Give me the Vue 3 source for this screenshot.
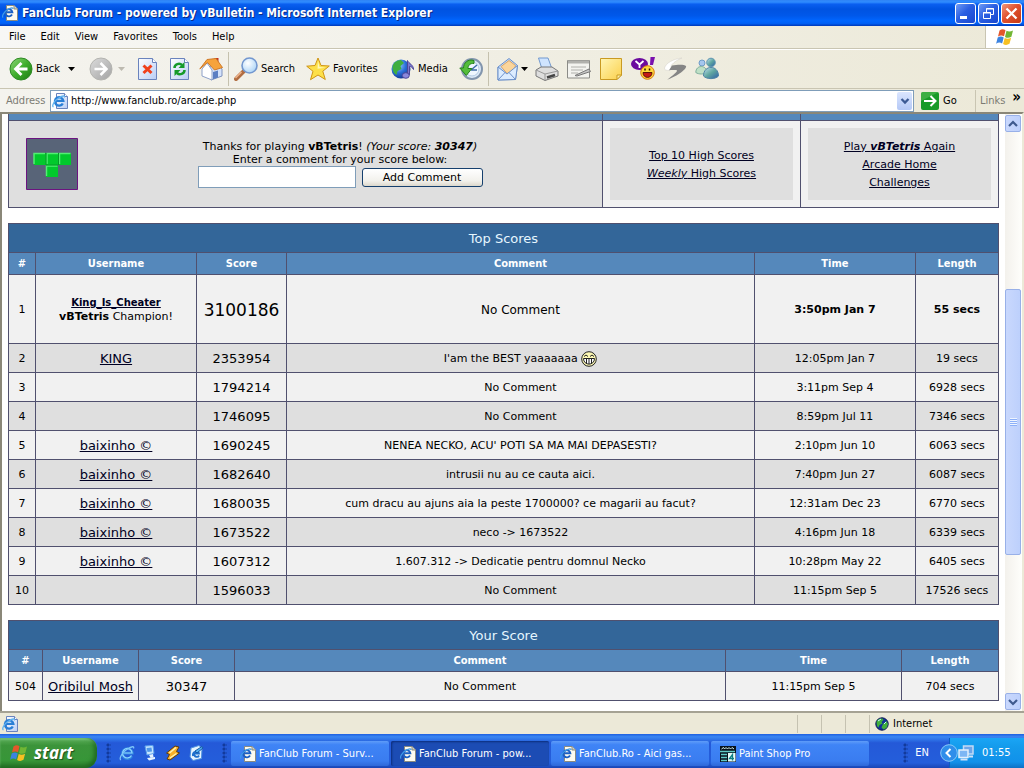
<script setup>
import { ref } from 'vue'

const address = ref('http://www.fanclub.ro/arcade.php')
const comment = ref('')

const menus = ['File', 'Edit', 'View', 'Favorites', 'Tools', 'Help']

const topScores = [
  { rank: 2, user: 'KING', score: '2353954', comment: "I'am the BEST yaaaaaaa", grin: true, time: '12:05pm Jan 7', length: '19 secs' },
  { rank: 3, user: '', score: '1794214', comment: 'No Comment', time: '3:11pm Sep 4', length: '6928 secs' },
  { rank: 4, user: '', score: '1746095', comment: 'No Comment', time: '8:59pm Jul 11', length: '7346 secs' },
  { rank: 5, user: 'baixinho ©', score: '1690245', comment: "NENEA NECKO, ACU' POTI SA MA MAI DEPASESTI?", time: '2:10pm Jun 10', length: '6063 secs' },
  { rank: 6, user: 'baixinho ©', score: '1682640', comment: 'intrusii nu au ce cauta aici.', time: '7:40pm Jun 27', length: '6087 secs' },
  { rank: 7, user: 'baixinho ©', score: '1680035', comment: 'cum dracu au ajuns aia la peste 1700000? ce magarii au facut?', time: '12:31am Dec 23', length: '6770 secs' },
  { rank: 8, user: 'baixinho ©', score: '1673522', comment: 'neco -> 1673522', time: '4:16pm Jun 18', length: '6339 secs' },
  { rank: 9, user: 'baixinho ©', score: '1607312', comment: '1.607.312 -> Dedicatie pentru domnul Necko', time: '10:28pm May 22', length: '6405 secs' },
  { rank: 10, user: '', score: '1596033', comment: 'No Comment', time: '11:15pm Sep 5', length: '17526 secs' },
]

const tasks = [
  { label: 'FanClub Forum - Surv...', icon: 'doc', active: false },
  { label: 'FanClub Forum - pow...', icon: 'doc', active: true },
  { label: 'FanClub.Ro - Aici gas...', icon: 'doc', active: false },
  { label: 'Paint Shop Pro', icon: 'psp', active: false },
]
</script>

<template>
  <div class="screen">
    <svg class="defs" aria-hidden="true">
      <defs>
        <linearGradient id="gGreen" x1="0" y1="0" x2="1" y2="1">
          <stop offset="0" stop-color="#8fd67a" /><stop offset=".5" stop-color="#3fae2c" /><stop offset="1" stop-color="#1c7a12" />
        </linearGradient>
        <linearGradient id="gGray" x1="0" y1="0" x2="1" y2="1">
          <stop offset="0" stop-color="#dcdcdc" /><stop offset="1" stop-color="#a2a2a2" />
        </linearGradient>
        <linearGradient id="gPage" x1="0" y1="0" x2="1" y2="1">
          <stop offset="0" stop-color="#ffffff" /><stop offset="1" stop-color="#b9cdf5" />
        </linearGradient>
        <linearGradient id="gNote" x1="0" y1="0" x2="1" y2="1">
          <stop offset="0" stop-color="#fff6b4" /><stop offset="1" stop-color="#fbd04c" />
        </linearGradient>
        <linearGradient id="gBody" x1="0" y1="0" x2="1" y2="1">
          <stop offset="0" stop-color="#c4e2f2" /><stop offset=".5" stop-color="#5fa6a0" /><stop offset="1" stop-color="#2f5fa8" />
        </linearGradient>
        <radialGradient id="gGlobe" cx=".35" cy=".3" r=".8">
          <stop offset="0" stop-color="#9fd0ff" /><stop offset=".5" stop-color="#2a6fd8" /><stop offset="1" stop-color="#0b2a86" />
        </radialGradient>
        <radialGradient id="gLens" cx=".4" cy=".35" r=".7">
          <stop offset="0" stop-color="#ffffff" /><stop offset="1" stop-color="#a9d3f7" />
        </radialGradient>
      </defs>
      <symbol id="doc" viewBox="0 0 16 16">
        <path d="M4.500 .5h7.500l3.500 3.500v11.500h-11z" fill="#fdfbf0" stroke="#8b8b80" />
        <path d="M12 .5v3.500h3.500" fill="#d8d4bc" stroke="#8b8b80" />
        <path d="M10 9.500a3.600 3.600 0 1 1 .4-2.200h-6" fill="none" stroke="#1b60c4" stroke-width="1.900" />
        <path d="M1.200 12.500c-2-1 1-6 4.500-8s5.800-2.300 5-.5" fill="none" stroke="#3f9be8" stroke-width="1.200" />
      </symbol>
      <symbol id="webpage" viewBox="0 0 16 16">
        <path d="M4.500 .5h8l3 3v12h-11z" fill="url(#gPage)" stroke="#6a83bd" />
        <path d="M12.500 .5v3h3" fill="#fff" stroke="#6a83bd" />
        <path d="M10.800 10.500a4.200 4.200 0 1 1 .5-2.600h-7" fill="none" stroke="#2a7fd6" stroke-width="2.400" />
        <path d="M1.500 14c-2.300-1 1-6.500 5.200-9s6.500-2.700 5.500-.5" fill="none" stroke="#62b4f0" stroke-width="1.300" />
      </symbol>
      <symbol id="ie" viewBox="0 0 16 16">
        <path d="M12.800 11a5 5 0 1 1 .6-2.800h-9" fill="none" stroke="#2f86e0" stroke-width="2.800" />
        <path d="M12.500 10.500a4.800 4.800 0 1 1 .6-2.500h-8" fill="none" stroke="#8fd4ff" stroke-width="1.200" />
        <path d="M2 15c-2.500-1 1-7.500 6-10.700s7.500-3.300 6.500-.8" fill="none" stroke="#7cc4f8" stroke-width="1.300" />
      </symbol>
      <symbol id="flag" viewBox="0 0 20 18">
        <path d="M4.500 2.500c2-1.600 4-1.600 6-.3L9 8.300c-2-1.200-4-1-6 .2z" fill="#e4572b" />
        <path d="M11.500 2.800c2 1.200 4.200 1 6.500-.3l-1.600 6.200c-2.200 1.300-4.400 1.400-6.400.2z" fill="#71b634" />
        <path d="M2.700 9.600c2-1.300 4-1.400 6-.2l-1.600 6c-2-1.200-4-1-6 .3z" fill="#3b83e0" />
        <path d="M9.700 10c2 1.200 4.200 1 6.400-.2l-1.600 6c-2.200 1.400-4.400 1.400-6.400.2z" fill="#f7c022" />
      </symbol>
      <symbol id="globe" viewBox="0 0 16 16">
        <circle cx="8" cy="8" r="6.200" fill="#12309a" stroke="#0a1550" />
        <path d="M2.500 6c1-3 4-4 6-3.500l1 1.500-2 2 1 1.500-3 1.500-1 2.500-1.500-1.500zM9 8l3.500-3 1.500 3-1.500 4-3 1.500-2-2z" fill="#3fae3a" />
        <path d="M4 5l3-2M10 8l2-2" stroke="#c9f5ff" />
      </symbol>
      <symbol id="psp" viewBox="0 0 16 16">
        <path d="M0 0h16v16h-16z" fill="#07121c" />
        <path d="M1.500 3l2-1.500 1 1.500 1.500-1.500L7.500 3 9 1.500 10.500 3 12 1.500 14 3" stroke="#d8f4f0" fill="none" />
        <path d="M0 5.500h15M1 8.500h6M1 11.500h6M1 14.500h6" stroke="#61c9c4" stroke-width="1.400" />
        <path d="M8 7h7.500v8.500h-7.500z" fill="#e6fbf7" />
        <path d="M12.500 14.500v-6l-3 4h4.500" stroke="#0c7f83" fill="none" stroke-width="1.300" />
      </symbol>
    </svg>

    <header class="titlebar">
      <svg class="i16"><use href="#doc" /></svg>
      <h1>FanClub Forum - powered by vBulletin - Microsoft Internet Explorer</h1>
      <button class="win" aria-label="Minimize"><svg viewBox="0 0 21 21"><path d="M5 14.500h7" stroke="#fff" stroke-width="3" /></svg></button>
      <button class="win" aria-label="Restore"><svg viewBox="0 0 21 21" fill="none" stroke="#fff"><path d="M8.500 9v-3.500h7v6h-2.500M8 6h8" /><path d="M5.500 9.500h7v6h-7zM5 10h8" /></svg></button>
      <button class="win close" aria-label="Close"><svg viewBox="0 0 21 21"><path d="M5.500 5.500l10 10M15.500 5.500l-10 10" stroke="#fff" stroke-width="2.300" /></svg></button>
    </header>

    <nav class="menubar">
      <button v-for="m in menus" :key="m">{{ m }}</button>
      <span class="brand"><svg viewBox="0 0 20 18"><use href="#flag" /></svg></span>
    </nav>

    <div class="toolbar">
      <button>
        <svg class="i24" viewBox="0 0 24 24"><circle cx="12" cy="12" r="11" fill="url(#gGreen)" stroke="#2f8a25" /><path d="M12.500 6l-6 6 6 6M7 12h11.500" fill="none" stroke="#fff" stroke-width="2.800" /></svg>
        Back
      </button>
      <button aria-label="Back history"><svg class="caret" viewBox="0 0 7 5"><path d="M0 0h7L3.500 4z" /></svg></button>
      <button aria-label="Forward"><svg class="i24" viewBox="0 0 24 24"><circle cx="12" cy="12" r="11" fill="url(#gGray)" stroke="#b4b4b0" /><path d="M11.500 6l6 6-6 6M17 12h-11.500" fill="none" stroke="#fff" stroke-width="2.500" /></svg></button>
      <button aria-label="Forward history"><svg class="caret" viewBox="0 0 7 5"><path d="M0 0h7L3.500 4z" fill="#bdbab0" /></svg></button>
      <button aria-label="Stop"><svg class="i24" viewBox="0 0 24 24"><path d="M1.500 1.500h14l4 4v17h-18z" fill="url(#gPage)" stroke="#6a83bd" /><path d="M15.500 1.500v4h4" fill="#fff" stroke="#6a83bd" /><path d="M6.500 8.500l8 7.500M14.500 8.500l-8 7.500" stroke="#f0401c" stroke-width="3" /></svg></button>
      <button aria-label="Refresh"><svg class="i24" viewBox="0 0 24 24"><path d="M1.500 1.500h14l4 4v17h-18z" fill="url(#gPage)" stroke="#6a83bd" /><path d="M15.500 1.500v4h4" fill="#fff" stroke="#6a83bd" /><path d="M5.500 11c0-4 5-5.500 7.500-3M15.500 13c0 4-5 5.500-7.500 3" fill="none" stroke="#159a2a" stroke-width="2.500" /><path d="M15.500 5v6h-6zM5.500 19v-6h6z" fill="#159a2a" /></svg></button>
      <button aria-label="Home">
        <svg class="i24" viewBox="0 0 24 24"><path d="M15.500 1h4v7h-4z" fill="#c23420" /><path d="M9 11l8-6 6 7v7l-11 4z" fill="#d4e2fb" stroke="#7f93be" /><path d="M3 12l5-6 5 7v10l-10-4z" fill="#fff" stroke="#8ea1c9" /><path d="M.8 12L8 2.500 17 1.500l6.500 9-8 2.500L8.500 5.500z" fill="#f6a33c" stroke="#cf7a28" /><path d="M14 15l5-1.500v7l-5 1.800z" fill="#5c7fc3" /></svg>
      </button>
      <i class="sep"></i>
      <button><svg class="i24" viewBox="0 0 24 24"><path d="M2 22l8-8" stroke="#b16d42" stroke-width="4" stroke-linecap="round" /><path d="M1.500 21l6-6" stroke="#efb48b" stroke-width="1.500" /><circle cx="15.500" cy="8.500" r="7.500" fill="url(#gLens)" stroke="#7397cf" stroke-width="1.600" /></svg>Search</button>
      <button><svg class="i24" viewBox="0 0 24 24"><path d="M12 1l3 7.500 8.300.5-6.500 5.200 2.500 8.300L12 18l-7.500 4.700 2.500-8.400L.7 9.200 9 8.500z" fill="#fde04a" stroke="#cf9416" stroke-linejoin="round" /><path d="M12 4l1.500 6 6 .7-8 1z" fill="#fff7b8" /></svg>Favorites</button>
      <button><svg class="i24" viewBox="0 0 24 24"><circle cx="10" cy="12" r="9.500" fill="url(#gGlobe)" /><path d="M1.500 10c.5-4 4-7 8.500-7l3 3-3.500 3 1 3-4 2-1 4c-2.500-1.500-4-4-4-8z" fill="#3fae3f" /><path d="M16.500 18V3.500c1 3 6 4 6 9-1-2-2.500-3-4-3V18" fill="#7c77cf" stroke="#4c4698" /><ellipse cx="14.800" cy="18.500" rx="3.500" ry="2.800" fill="#8a88dc" stroke="#4c4698" /></svg>Media</button>
      <button aria-label="History"><svg class="i24" viewBox="0 0 24 24"><circle cx="13" cy="12" r="10" fill="#dceaf8" stroke="#8295ad" stroke-width="2" /><circle cx="13" cy="12" r="7" fill="#eff7ff" stroke="#b5cbe4" /><path d="M12 13l6-5M12 13h6" stroke="#3f6ea8" stroke-width="1.500" /><path d="M15 3.500C9 1.500 4.500 6 4.500 11H.8l6.500 7.500 5.500-7H9c0-3 2-5.500 6-5z" fill="#55bd3b" stroke="#24801c" /></svg></button>
      <i class="sep"></i>
      <button aria-label="Mail"><svg class="i24" viewBox="0 0 24 24"><path d="M2 10L13 1.500l8.500 7-2 14L2 23z" fill="#c3dcfb" stroke="#6d91ca" /><path d="M5 9.500l8-6 6.500 5-1.500 5-7 3z" fill="#fbd59b" stroke="#d6a46a" /><path d="M2 10l9 7L21.500 8.500l-2 14L2 23z" fill="#dcecff" stroke="#6d91ca" /><path d="M2 23l7.500-8M19.500 22.500L13 15.500" stroke="#6d91ca" /></svg></button>
      <button aria-label="Mail options"><svg class="caret" viewBox="0 0 7 5"><path d="M0 0h7L3.500 4z" /></svg></button>
      <button aria-label="Print"><svg class="i24" viewBox="0 0 24 24"><path d="M3.500 1h9.500l4 11H7z" fill="#cfe4ff" stroke="#7299cf" /><path d="M1 13l5-3h11l6 4v5l-13 4.500L1 19z" fill="#dedede" stroke="#777" /><path d="M1 13l9 4 13-3M10 17v6" fill="none" stroke="#999" /><path d="M12 20.500l8-2.500" stroke="#444" stroke-width="2.500" /></svg></button>
      <button aria-label="Edit"><svg class="i24" viewBox="0 0 24 24"><path d="M.5 3.500h22v17.500H.5z" fill="#f3f3ef" stroke="#8c8c88" /><path d="M1 5h21" stroke="#b1b1ad" stroke-width="3" /><path d="M4 10h15M4 13h12M4 16h7" stroke="#b0b0ac" /><path d="M8 18.500l14-6.500 1.500 2.500L10 19z" fill="#c9c9c9" stroke="#777" /></svg></button>
      <button aria-label="Notes"><svg class="i24" viewBox="0 0 24 24"><path d="M1.500 1.500h21V18l-4.500 4.500H1.500z" fill="url(#gNote)" stroke="#c99a22" /><path d="M22.500 18H18v4.500z" fill="#fff2a8" stroke="#c99a22" /></svg></button>
      <button aria-label="Yahoo Messenger"><svg class="i24" viewBox="0 0 24 24"><ellipse cx="8.500" cy="7" rx="8.500" ry="6" fill="#6b0b9e" /><path d="M9 11l3 6 2-6z" fill="#6b0b9e" /><path d="M4.500 4l4 3.500 4-3.500M8.500 7v4" stroke="#fff" stroke-width="1.800" fill="none" /><path d="M19.500 0h4.500l-2 8h-3z" fill="#7a10ae" /><circle cx="16.500" cy="15.500" r="6.800" fill="#ffd83a" stroke="#d97814" /><path d="M12 15.500h9c0 6.500-9 6.500-9 0z" fill="#c51a16" stroke="#5d1407" /><path d="M14 11.500v2M18.500 11.500v2" stroke="#2c1300" stroke-width="1.500" /></svg></button>
      <button aria-label="Quick link"><svg class="i24" viewBox="0 0 24 24"><path d="M19 1C10 2 3 6 1.500 11c-.3 2 2 2.500 5 2.500l4-3C8 10.500 7.500 9.500 9 7.500 11 5 15 2.500 19 1z" fill="#fff" stroke="#d6d4cb" stroke-width=".6" /><path d="M9 8.500c5-1 12-1.500 14 .5 1 2-4 6-8 8.500S6 22 4 23c4-3.500 8.500-6.500 10-9 .5-1-1-1.200-8-.8z" fill="#858585" /></svg></button>
      <button aria-label="Messenger"><svg class="i24" viewBox="0 0 24 24"><circle cx="7" cy="6" r="3" fill="#a5c6ee" stroke="#6f9cc8" /><path d="M.8 15.500c0-8 11-8 11 0-3 2-8 2-11 0z" fill="#bfe0c6" stroke="#7fae9c" /><circle cx="16" cy="5.500" r="4.300" fill="url(#gBody)" stroke="#5c93b0" /><path d="M8.500 19c0-11.500 15-11.500 15 0-3 3.500-12 3.500-15 0z" fill="url(#gBody)" stroke="#4f84a6" /></svg></button>
    </div>

    <form class="addressbar" @submit.prevent>
      <label for="address">Address</label>
      <div class="combo">
        <svg class="i16"><use href="#webpage" /></svg>
        <input id="address" v-model="address" type="text" />
        <button type="button" class="arrow" aria-label="Show addresses"><svg viewBox="0 0 10 8"><path d="M1.500 2L5 5.500 8.500 2" fill="none" stroke="#3c5a94" stroke-width="2.300" /></svg></button>
      </div>
      <button class="go"><svg viewBox="0 0 18 18"><path d="M0 0h18v18h-18z" fill="#189a28" /><path d="M0 0h18L0 9z" fill="#5fc15e" opacity=".5" /><path d="M3 9h11M9.500 4l5 5-5 5" fill="none" stroke="#fff" stroke-width="2" /></svg>Go</button>
      <span class="links">Links <b>»</b></span>
    </form>

    <div class="viewport">
      <main class="page">
        <table class="grid intro">
          <colgroup><col /><col class="w197" /><col class="w197" /></colgroup>
          <tbody>
            <tr class="strip"><td></td><td></td><td></td></tr>
            <tr class="panel">
              <td class="alt">
                <div class="play">
                  <svg class="tetris" viewBox="0 0 52 52">
                    <path d="M.5.500h51v51H.5z" fill="#586478" stroke="#6c1480" />
                    <path d="M8 15h37v12H32v12H20V27H8z" fill="#02c92c" />
                    <path d="M8 26V15.500h11M21 26V15.500h11M33.500 26V15.500h11M20.500 38V28h11" fill="none" stroke="#52ee72" stroke-width="1.500" />
                    <path d="M20 15v12M32.500 15v12M20 27h12" stroke="#079a28" />
                  </svg>
                  <form class="comment" @submit.prevent>
                    <p>Thanks for playing <b>vBTetris</b>! <i>(Your score: <b>30347</b>)</i></p>
                    <label for="comment">Enter a comment for your score below:</label>
                    <div class="fields">
                      <input id="comment" v-model="comment" type="text" />
                      <button>Add Comment</button>
                    </div>
                  </form>
                </div>
              </td>
              <td class="light">
                <div class="inset"><a href="#top">Top 10 High Scores</a><a href="#weekly"><i>Weekly</i> High Scores</a></div>
              </td>
              <td class="light">
                <div class="inset"><a href="#play">Play <b><i>vBTetris</i></b> Again</a><a href="#home">Arcade Home</a><a href="#challenges">Challenges</a></div>
              </td>
            </tr>
          </tbody>
        </table>

        <table class="grid scores">
          <colgroup><col class="w26" /><col class="w160" /><col class="w89" /><col /><col class="w160" /><col class="w82" /></colgroup>
          <thead>
            <tr class="caption"><th colspan="6">Top Scores</th></tr>
            <tr class="heads"><th>#</th><th>Username</th><th>Score</th><th>Comment</th><th>Time</th><th>Length</th></tr>
          </thead>
          <tbody>
            <tr class="champ">
              <td>1</td>
              <td><a class="king" href="#user">King_Is_Cheater</a><br /><b>vBTetris</b> Champion!</td>
              <td class="big">3100186</td>
              <td class="mid">No Comment</td>
              <td><b>3:50pm Jan 7</b></td>
              <td><b>55 secs</b></td>
            </tr>
            <tr v-for="r in topScores" :key="r.rank" class="row">
              <td>{{ r.rank }}</td>
              <td class="name"><a v-if="r.user" href="#user">{{ r.user }}</a></td>
              <td class="score">{{ r.score }}</td>
              <td>
                {{ r.comment }}
                <svg v-if="r.grin" class="grin" viewBox="0 0 16 16" role="img" aria-label="grin"><circle cx="8" cy="8" r="7.300" fill="#fdf9b4" stroke="#222" /><path d="M3 5.500l2-1.500 2 1.500M9 5.500l2-1.500 2 1.500" fill="none" stroke="#222" /><path d="M2.500 7.500h11c0 7.500-11 7.500-11 0z" fill="#fff" stroke="#222" /><path d="M5.500 8v4.500M8 8v5M10.500 8v4.500" stroke="#222" /></svg>
              </td>
              <td>{{ r.time }}</td>
              <td>{{ r.length }}</td>
            </tr>
          </tbody>
        </table>

        <table class="grid scores">
          <colgroup><col class="w33" /><col class="w95" /><col class="w95" /><col /><col class="w175" /><col class="w96" /></colgroup>
          <thead>
            <tr class="caption"><th colspan="6">Your Score</th></tr>
            <tr class="heads"><th>#</th><th>Username</th><th>Score</th><th>Comment</th><th>Time</th><th>Length</th></tr>
          </thead>
          <tbody>
            <tr class="row own">
              <td>504</td>
              <td class="name"><a href="#user">Oribilul Mosh</a></td>
              <td class="score">30347</td>
              <td>No Comment</td>
              <td>11:15pm Sep 5</td>
              <td>704 secs</td>
            </tr>
          </tbody>
        </table>
      </main>
      <div class="scroll">
        <button aria-label="Scroll up"><svg viewBox="0 0 10 8"><path d="M1 6L5 2l4 4" fill="none" stroke="#3f5a8e" stroke-width="2.200" /></svg></button>
        <div class="above"></div>
        <div class="thumb"><i></i></div>
        <div class="below"></div>
        <button aria-label="Scroll down"><svg viewBox="0 0 10 8"><path d="M1 2l4 4 4-4" fill="none" stroke="#3f5a8e" stroke-width="2.200" /></svg></button>
      </div>
    </div>

    <div class="status">
      <svg class="i16"><use href="#webpage" /></svg>
      <i></i><i></i><i></i>
      <span class="zone"><svg class="i16"><use href="#globe" /></svg>Internet</span>
    </div>

    <footer class="taskbar">
      <button class="start"><svg viewBox="0 0 20 18"><use href="#flag" /></svg>start</button>
      <i class="dots"></i>
      <div class="quick">
        <button aria-label="Internet Explorer"><svg class="i16"><use href="#ie" /></svg></button>
        <button aria-label="Show desktop"><svg class="i16" viewBox="0 0 16 16"><path d="M3 1l8-.5 1 8-7 1.500z" fill="#c6e6ff" stroke="#5aa0ec" /><path d="M4.500 3l5-.5.500 4-4.500.5z" fill="#4f97ea" /><path d="M7 10l4-1 .5 3-3 .5zM5 13l8-1v2l-6 1.500z" fill="#e6f3ff" /></svg></button>
        <button aria-label="Winamp"><svg class="i16" viewBox="0 0 16 16"><path d="M10 1L1.500 8l3 1.500L2 14l3 1L14.500 8l-3-1.500L14 2z" fill="#f9b028" stroke="#5d3a10" /><path d="M11 2.500L4.500 8M11.500 8.500L5 13" stroke="#fff3b5" stroke-width="1.500" /></svg></button>
        <button aria-label="Outlook Express"><svg class="i16" viewBox="0 0 16 16"><path d="M3 3l8-2.500 3 3-.5 10L5 15.500 2 12z" fill="#e6f4ff" stroke="#4f92de" /><path d="M5 11c-1-5 6-6 6-2.500H6c0 4 4 4 5 2" fill="none" stroke="#1f70cd" stroke-width="1.800" /><path d="M7 6l7-4.500 1 1.500-6 5z" fill="#53b1f1" stroke="#175ba6" /></svg></button>
      </div>
      <i class="dots"></i>
      <div class="tasks">
        <button v-for="t in tasks" :key="t.label" :class="{ active: t.active }"><svg class="i16"><use :href="'#' + t.icon" /></svg><span>{{ t.label }}</span></button>
      </div>
      <i class="dots"></i>
      <span class="lang">EN</span>
      <div class="tray">
        <button class="expand" aria-label="Show hidden icons"><svg viewBox="0 0 18 18"><circle cx="9" cy="9" r="8.300" fill="#2f8eea" stroke="#8ccaf8" /><path d="M10.500 5L6.500 9l4 4" fill="none" stroke="#fff" stroke-width="2" /></svg></button>
        <svg class="i16" viewBox="0 0 16 16"><path d="M5.500 1h9.500v8H5.500z" fill="#6ca6ea" stroke="#c3daf5" stroke-width="1.500" /><path d="M1 5h9v7.500h-9z" fill="#7db6f4" stroke="#e2effc" stroke-width="1.500" /><path d="M2.500 14.500h7M11 11.500h4" stroke="#cfe2fa" stroke-width="2" /></svg>
        <time>01:55</time>
      </div>
    </footer>
  </div>
</template>

<style>
html, body, #app { height: 100%; margin: 0; }
body { overflow: hidden; }
</style>

<style scoped>
* { box-sizing: border-box; }
.screen {
  height: 100%;
  display: flex;
  flex-direction: column;
  overflow: hidden;
  background: #fff;
  color: #000;
  font: 11px/14px "DejaVu Sans Condensed", "DejaVu Sans", Tahoma, sans-serif;
}
.defs { position: absolute; width: 0; height: 0; }
button { font: inherit; color: inherit; border: 0; padding: 0; margin: 0; background: none; }
input { font: inherit; color: inherit; border: 0; padding: 0; margin: 0; min-width: 0; }
p { margin: 0; }
svg { display: block; flex: none; }
.i16 { width: 16px; height: 16px; }
.i24 { width: 24px; height: 24px; }

.titlebar {
  flex: none;
  height: 26px;
  display: flex;
  align-items: center;
  gap: 2px;
  padding: 0 2px;
  background: linear-gradient(#2f83f5 0, #2f8cff 8%, #0a5ff0 16%, #0053e1 35%, #0058ea 60%, #0066ff 80%, #0060f5 90%, #0038b8 100%);
}
.titlebar h1 {
  flex: 1;
  margin: 0 0 0 2px;
  color: #fff;
  font: bold 12px/18px "DejaVu Sans Condensed", "DejaVu Sans", sans-serif;
  text-shadow: 1px 1px 0 #0a2a86;
  white-space: nowrap;
  overflow: hidden;
}
.win {
  width: 21px;
  height: 21px;
  border: 1px solid #fff;
  border-radius: 3px;
  background: linear-gradient(135deg, #6f9bf5, #2b5fe2 45%, #1847cf);
}
.win svg { width: 21px; height: 21px; margin: -1px; }
.close { background: linear-gradient(135deg, #f0977c, #e0512f 45%, #c53a16); }

.menubar {
  flex: none;
  height: 23px;
  display: flex;
  align-items: stretch;
  gap: 15px;
  padding-left: 9px;
  background: linear-gradient(90deg, #f7f7f5, #ece9d8);
  border-bottom: 1px solid #c9c5b2;
}
.brand {
  width: 39px;
  margin-left: auto;
  display: grid;
  place-items: center;
  background: #fff;
  border-left: 1px solid #c9c5b2;
}
.brand svg { width: 20px; height: 18px; }

.toolbar {
  flex: none;
  height: 40px;
  display: grid;
  grid-template-columns: 59px 21px 29px 19px 32px 30px 29px 6px 72px 85px 68px 29px 8px 25px 14px 32px 32px 32px 32px 32px 32px;
  align-items: center;
  padding-left: 9px;
  background: linear-gradient(90deg, #f4f3ee, #ece9d8);
  border-top: 1px solid #fff;
  border-bottom: 1px solid #c9c5b2;
}
.toolbar button { display: flex; align-items: center; gap: 3px; white-space: nowrap; }
.caret { width: 7px; height: 5px; }
.sep { width: 1px; height: 34px; background: #c5c1ae; }

.addressbar {
  flex: none;
  height: 23px;
  display: flex;
  align-items: center;
  padding-left: 6px;
  background: linear-gradient(90deg, #f4f3ee, #ece9d8);
}
.addressbar label { width: 44px; color: #7c7b73; }
.combo {
  flex: 1;
  height: 22px;
  display: flex;
  align-items: center;
  padding: 1px 1px 1px 1px;
  border: 1px solid #7f9db9;
  background: #fff;
}
.combo input { flex: 1; height: 18px; margin-left: 3px; background: none; }
.arrow {
  width: 15px;
  height: 18px;
  display: grid;
  place-items: center;
  border-radius: 2px;
  background: linear-gradient(#dbe6ff, #b4c8f6);
}
.arrow svg { width: 10px; height: 8px; }
.go { width: 54px; margin-left: 7px; display: flex; align-items: center; gap: 4px; }
.go svg { width: 18px; height: 18px; border-radius: 2px; }
.links {
  width: 49px;
  height: 22px;
  display: flex;
  justify-content: space-between;
  padding: 4px 3px 0 4px;
  border-left: 1px solid #c9c5b2;
  color: #7c7b73;
}
.links b { color: #000; font-size: 15px; line-height: 7px; }

.viewport {
  flex: 1;
  min-height: 0;
  display: flex;
  border: solid #716f64;
  border-width: 2px 2px 0;
  border-color: #8a8778 #ece9d8 #fff #8a8778;
  background: #fff;
}
.page {
  flex: 1;
  min-width: 0;
  overflow: hidden;
  padding: 0 6px;
  font-family: "DejaVu Sans", Verdana, sans-serif;
}
a { color: #000022; text-decoration: underline; }
.grid {
  width: 100%;
  table-layout: fixed;
  border-collapse: separate;
  border-spacing: 1px;
  margin: 0 0 15px;
  background: #50506e;
  text-align: center;
}
.grid th, .grid td { padding: 0; }
.scores th, .scores td { padding-top: 1px; }
.intro { margin-top: -1px; }
.strip td { height: 6px; background: #5588bb; }
.panel td { height: 86px; }
.alt { background: #dfdfdf; }
.light { background: #f1f1f1; }
.w26 { width: 26px; }
.w33 { width: 33px; }
.w82 { width: 82px; }
.w89 { width: 89px; }
.w95 { width: 95px; }
.w96 { width: 96px; }
.w160 { width: 160px; }
.w175 { width: 175px; }
.w197 { width: 197px; }

.play { display: flex; align-items: center; padding-left: 17px; }
.tetris { width: 52px; height: 52px; }
.comment { flex: 1; line-height: 13px; }
.comment label { display: block; }
.fields { display: flex; justify-content: center; align-items: center; gap: 6px; }
.fields input { width: 158px; height: 22px; border: 1px solid #7f9db9; background: #fff; }
.fields button {
  width: 121px;
  height: 19px;
  border: 1px solid #16406e;
  border-radius: 3px;
  background: linear-gradient(#fff, #f2f1ec 70%, #dcd8cc);
}
.inset {
  height: 72px;
  margin: 0 7px;
  padding-top: 1px;
  display: flex;
  flex-direction: column;
  justify-content: center;
  align-items: center;
  background: #dfdfdf;
  line-height: 18px;
}

.caption th { height: 28px; background: #336699; color: #e6f6ff; font-size: 13px; font-weight: normal; }
.heads th {
  height: 21px;
  background: #5588bb;
  color: #fff;
  font-family: "DejaVu Sans Condensed", "DejaVu Sans", sans-serif;
}
.champ td { height: 68px; background: #f1f1f1; }
.king { font-weight: bold; font-size: 10px; }
.grid .big { font-size: 17px; }
.mid { font-size: 12px; }
.row td { height: 28px; background: #f1f1f1; }
.row:nth-child(even) td { background: #dfdfdf; }
.name, .score { font-size: 13px; }
.grin { display: inline-block; width: 16px; height: 16px; vertical-align: middle; }

.scroll { flex: none; width: 17px; display: flex; flex-direction: column; background: linear-gradient(90deg, #f3f1ec, #fefefb); padding: 1px 1px 1px 0; }
.scroll button, .thumb {
  border: 1px solid #98b0e8;
  border-radius: 2px;
  background: linear-gradient(90deg, #c9d8fd, #bdd0fc);
  display: grid;
  place-items: center;
}
.scroll button { flex: none; height: 17px; }
.scroll button svg { width: 10px; height: 8px; }
.above { flex: 158; }
.thumb { flex: 264; }
.below { flex: 139; }
.thumb i { width: 7px; height: 8px; background: repeating-linear-gradient(#eef4ff 0 1px, #8cb0f8 1px 2px); }

.status {
  flex: none;
  height: 23px;
  display: flex;
  align-items: center;
  padding: 0 2px;
  background: #ece9d8;
  border-top: 2px solid #a5a294;
}
.status > svg { margin-right: auto; }
.status > i { width: 24px; height: 18px; border-left: 1px solid #c5c2b1; }
.zone { width: 153px; height: 18px; display: flex; align-items: center; gap: 3px; padding-left: 4px; border-left: 1px solid #c5c2b1; }

.taskbar {
  flex: none;
  height: 34px;
  display: flex;
  align-items: stretch;
  padding-top: 4px;
  color: #fff;
  background: linear-gradient(#1d5fe0 0, #3a86f2 8%, #2f74e8 16%, #2459d8 26%, #245edb 85%, #1a45b4 100%);
}
.start {
  width: 97px;
  display: flex;
  align-items: center;
  gap: 5px;
  padding: 0 0 1px 9px;
  border-radius: 0 10px 12px 0;
  background: linear-gradient(#5cae5a, #3b943a 25%, #379638 75%, #2a7a2b);
  box-shadow: inset -3px -2px 4px #1f6a20, inset 0 2px 2px #7cc77b;
  font: italic bold 17px/20px "Open Sans", "Noto Sans", sans-serif;
  text-shadow: 1px 1px 1px #1c4d1c;
}
.start svg { width: 20px; height: 18px; }
.dots {
  width: 5px;
  margin: 5px 0 5px;
  flex: none;
  background: radial-gradient(circle, #123a9c 1px, transparent 2px) 0 0 / 4px 4px;
}
.start + .dots { margin-left: 9px; }
.quick { flex: none; display: flex; align-items: center; gap: 7px; margin: 0 18px 0 8px; }
.tasks { flex: 1; max-width: 800px; display: grid; grid-template-columns: repeat(4, minmax(0, 158px)); gap: 2px; margin-left: 4px; padding: 3px 0 2px; }
.tasks button {
  display: flex;
  align-items: center;
  gap: 3px;
  padding-left: 9px;
  border-radius: 2px;
  background: linear-gradient(#5f9cf8 0, #3f84f6 15%, #3a7cf0 80%, #2f68d8 100%);
  white-space: nowrap;
}
.tasks .active { background: #1c4cb4; box-shadow: inset 1px 1px 2px #0c2d7c; }
.lang { align-self: center; margin: 0 20px 0 7px; }
.tray {
  flex: none;
  width: 75px;
  display: flex;
  align-items: center;
  border-left: 1px solid #0a5cc0;
  background: linear-gradient(#1aa5f5, #149bec 30%, #1191ea 80%, #0e70c4);
}
.expand { margin-left: -10px; }
.expand svg { width: 18px; height: 18px; }
.tray time { margin-left: 8px; }
</style>
